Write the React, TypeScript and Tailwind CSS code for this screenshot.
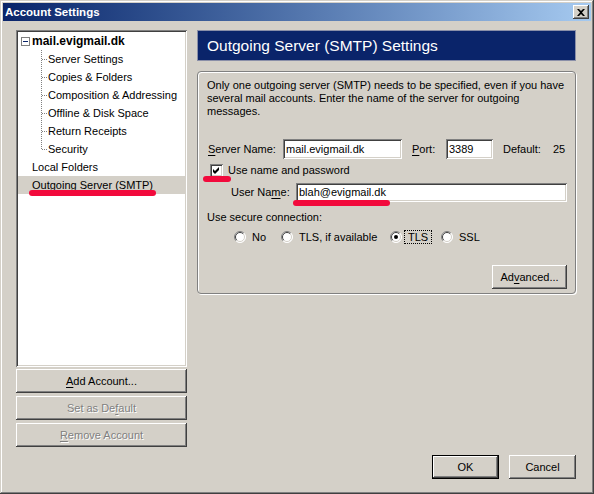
import React from 'react';

const bevelRaised = 'shadow-[inset_-1px_-1px_#404040,inset_1px_1px_#ffffff,inset_-2px_-2px_#808080,inset_2px_2px_#d4d0c8]';
const bevelSunken = 'shadow-[inset_1px_1px_#808080,inset_-1px_-1px_#ffffff,inset_2px_2px_#404040,inset_-2px_-2px_#d4d0c8]';

const Key: React.FC<{ children: React.ReactNode }> = ({ children }) => (
  <span className="underline underline-offset-[2px]">{children}</span>
);

const Button: React.FC<{ children: React.ReactNode; disabled?: boolean; isDefault?: boolean; className?: string }> = ({
  children,
  disabled,
  isDefault,
  className = '',
}) => (
  <div
    className={`flex items-center justify-center bg-[#d4d0c8] ${isDefault ? 'border border-black' : ''} ${className}`}
  >
    <div
      className={`flex h-full w-full items-center justify-center ${bevelRaised} ${
        disabled ? 'text-[#808080] [text-shadow:1px_1px_#ffffff]' : 'text-black'
      }`}
    >
      {children}
    </div>
  </div>
);

const TextField: React.FC<{ value: string; className?: string }> = ({ value, className = '' }) => (
  <div className={`flex items-center bg-white pl-[3px] text-black ${bevelSunken} ${className}`}>{value}</div>
);

const Radio: React.FC<{ checked?: boolean }> = ({ checked }) => (
  <svg width="12" height="12" viewBox="0 0 12 12" className="shrink-0">
    <circle cx="6" cy="6" r="5.5" fill="#ffffff" />
    <path d="M2.1 9.9 A5.5 5.5 0 0 1 9.9 2.1" stroke="#808080" fill="none" />
    <path d="M9.9 2.1 A5.5 5.5 0 0 1 2.1 9.9" stroke="#ffffff" fill="none" />
    <path d="M2.8 9.2 A4.5 4.5 0 0 1 9.2 2.8" stroke="#404040" fill="none" />
    <path d="M9.2 2.8 A4.5 4.5 0 0 1 2.8 9.2" stroke="#d4d0c8" fill="none" />
    {checked && <circle cx="6" cy="6" r="2" fill="#000000" />}
  </svg>
);

const TreeLine: React.FC<{ last?: boolean }> = ({ last }) => (
  <svg width="7" height="18" viewBox="0 0 7 18" className="shrink-0">
    <line x1="0.5" y1="0" x2="0.5" y2={last ? 9 : 18} stroke="#808080" strokeDasharray="1 1" />
    <line x1="1" y1="9.5" x2="7" y2="9.5" stroke="#808080" strokeDasharray="1 1" />
  </svg>
);

const children = [
  'Server Settings',
  'Copies & Folders',
  'Composition & Addressing',
  'Offline & Disk Space',
  'Return Receipts',
  'Security',
];

const Marker: React.FC<{ className: string }> = ({ className }) => (
  <div className={`pointer-events-none absolute rounded-full bg-[#f20a3c] ${className}`} />
);

export default function App() {
  return (
    <div
      className={`relative flex h-[494px] w-[594px] flex-col bg-[#d4d0c8] p-[3px] font-['Liberation_Sans',Arial,sans-serif] text-[11px] leading-[13px] text-black shadow-[inset_-1px_-1px_#404040,inset_1px_1px_#d4d0c8,inset_-2px_-2px_#808080,inset_2px_2px_#ffffff]`}
    >
      {/* title bar */}
      <div className="flex h-[18px] items-center justify-between bg-linear-to-r from-[#0a246a] to-[#a6caf0] pl-[2px] pr-[2px]">
        <span className="text-[11.5px] font-bold text-white">Account Settings</span>
        <div className={`flex h-[14px] w-[16px] items-center justify-center bg-[#d4d0c8] ${bevelRaised}`}>
          <svg width="8" height="7" viewBox="0 0 8 7">
            <path d="M0 0 L2 0 L4 2 L6 0 L8 0 L5 3.5 L8 7 L6 7 L4 5 L2 7 L0 7 L3 3.5 Z" fill="#000000" />
          </svg>
        </div>
      </div>

      {/* body */}
      <div className="flex pl-[13px] pt-[9px]">
        {/* left column */}
        <div className="flex w-[171px] flex-col">
          <div className={`flex h-[337px] flex-col bg-white p-[2px] pt-[2px] ${bevelSunken}`}>
            <div className="flex h-[18px] items-center pl-[3px]">
              <div className="flex h-[9px] w-[9px] items-center justify-center border border-[#808080] bg-white">
                <div className="h-[1px] w-[5px] bg-[#0a246a]" />
              </div>
              <span className="ml-[2px] text-[12px] font-bold">mail.evigmail.dk</span>
            </div>
            {children.map((c, i) => (
              <div key={c} className="flex h-[18px] items-center pl-[23px]">
                <TreeLine last={i === children.length - 1} />
                <span>{c}</span>
              </div>
            ))}
            <div className="flex h-[18px] items-center pl-[14px]">Local Folders</div>
            <div className="flex h-[18px] items-center bg-[#d4d0c8] pl-[14px]">Outgoing Server (SMTP)</div>
          </div>
          <div className="mt-[2px] flex flex-col gap-[3px]">
            <Button className="h-[24px]">
              <span>
                <Key>A</Key>dd Account...
              </span>
            </Button>
            <Button className="h-[24px]" disabled>
              <span>
                Set as De<Key>f</Key>ault
              </span>
            </Button>
            <Button className="h-[24px]" disabled>
              <span>
                <Key>R</Key>emove Account
              </span>
            </Button>
          </div>
        </div>

        {/* right column */}
        <div className="ml-[10px] flex w-[379px] flex-col">
          <div className="flex h-[31px] items-center border border-[#8a8fa8] bg-[#0a246a] pl-[9px] text-[15.5px] text-white">
            Outgoing Server (SMTP) Settings
          </div>
          <div className="mt-[10px] flex h-[223px] flex-col rounded-[4px] border border-[#808080] pl-[9px] pr-[8px] pt-[7px] shadow-[inset_1px_1px_#ffffff,1px_1px_#ffffff]">
            <div className="flex flex-col">
              <span>Only one outgoing server (SMTP) needs to be specified, even if you have</span>
              <span>several mail accounts. Enter the name of the server for outgoing</span>
              <span>messages.</span>
            </div>

            <div className="mt-[21px] flex h-[20px] items-center">
              <span className="w-[76px] pl-[1px]">
                <Key>S</Key>erver Name:
              </span>
              <TextField value="mail.evigmail.dk" className="h-[20px] w-[119px]" />
              <span className="ml-[10px] w-[34px]">
                <Key>P</Key>ort:
              </span>
              <TextField value="3389" className="h-[20px] w-[47px]" />
              <span className="ml-[10px] w-[50px]">Default:</span>
              <span>25</span>
            </div>

            <div className="mt-[5px] flex h-[13px] items-center pl-[3px]">
              <div className={`flex h-[13px] w-[13px] items-center justify-center bg-white ${bevelSunken}`}>
                <svg width="7" height="7" viewBox="0 0 7 7">
                  <path d="M0 2 L2 4 L6 0 L6 3 L2 7 L0 5 Z" fill="#000000" />
                </svg>
              </div>
              <span className="ml-[5px]">Use name and password</span>
            </div>

            <div className="mt-[6px] flex h-[19px] items-center pl-[24px]">
              <span className="w-[65px]">
                User Na<Key>m</Key>e:
              </span>
              <TextField value="blah@evigmail.dk" className="h-[19px] w-[271px]" />
            </div>

            <div className="mt-[9px]">Use secure connection:</div>

            <div className="mt-[6px] flex h-[14px] items-center pl-[27px]">
              <div className="flex w-[47px] items-center">
                <Radio />
                <span className="ml-[6px]">No</span>
              </div>
              <div className="flex w-[109px] items-center">
                <Radio />
                <span className="ml-[6px]">TLS, if available</span>
              </div>
              <div className="flex w-[51px] items-center">
                <Radio checked />
                <span className="ml-[2px] border border-dotted border-black px-[3px] leading-[12px]">TLS</span>
              </div>
              <div className="flex items-center">
                <Radio />
                <span className="ml-[6px]">SSL</span>
              </div>
            </div>

            <div className="mt-[21px] flex justify-end">
              <Button className="h-[24px] w-[75px]">
                <span>
                  Ad<Key>v</Key>anced...
                </span>
              </Button>
            </div>
          </div>
        </div>
      </div>

      {/* footer */}
      <div className="mt-[8px] flex justify-end gap-[10px] pr-[15px]">
        <Button className="h-[24px] w-[67px]" isDefault>
          OK
        </Button>
        <Button className="h-[24px] w-[67px]">Cancel</Button>
      </div>

      <Marker className="left-[29px] top-[190px] h-[6px] w-[127px]" />
      <Marker className="left-[203px] top-[176px] h-[6px] w-[28px]" />
      <Marker className="left-[293px] top-[200px] h-[6px] w-[97px]" />
    </div>
  );
}
